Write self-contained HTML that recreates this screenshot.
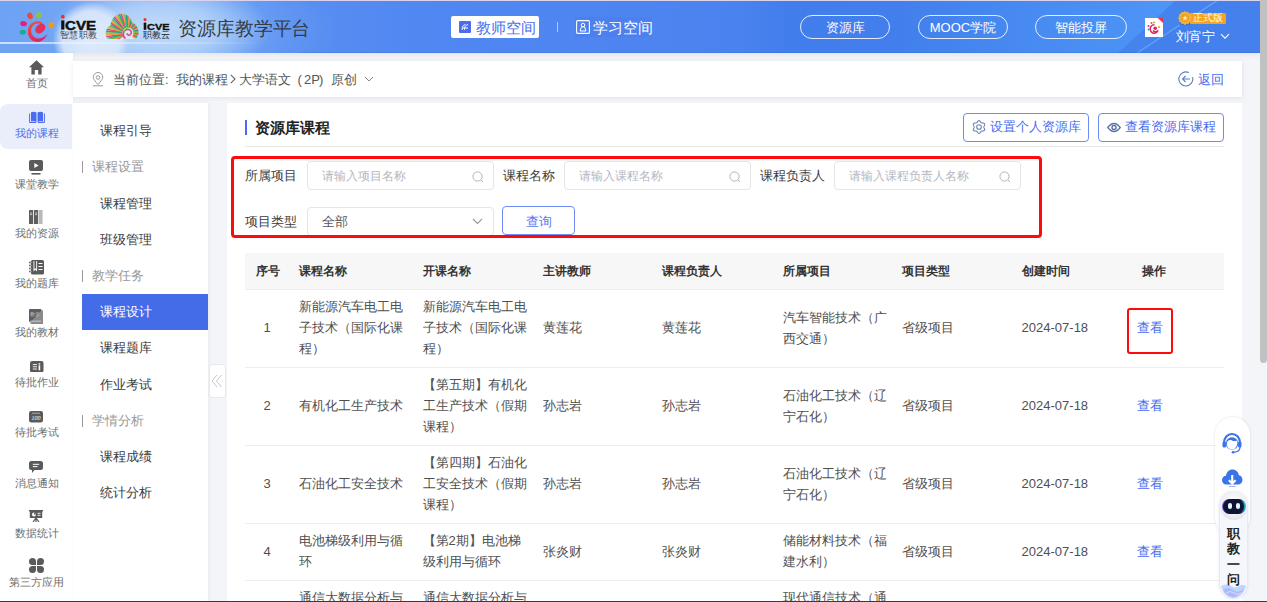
<!DOCTYPE html>
<html><head><meta charset="utf-8">
<style>
*{box-sizing:border-box;margin:0;padding:0}
html,body{width:1267px;height:602px;overflow:hidden}
body{font-family:"Liberation Sans",sans-serif;background:#f4f5f9;position:relative;color:#333;font-size:13px}
.a{position:absolute;white-space:nowrap}
#hdr{position:absolute;left:0;top:0;width:1260px;height:53px;background:linear-gradient(90deg,#6ea2f3 0px,#6a9ff3 200px,#5a8ff2 280px,#5187f1 420px,#4e84f0 650px,#4a82ef 740px,#417eec 790px,#4380ec 1000px,#4580ec 1260px);overflow:hidden;box-shadow:0 2px 6px rgba(0,0,0,.07)}
#hdr::after{content:'';position:absolute;left:300px;top:52px;width:960px;height:1px;background:rgba(40,100,220,.25)}
#hdr .topline{position:absolute;left:0;top:0;width:1260px;height:1px;background:#d9d3ee}
.pill{position:absolute;top:15px;height:24px;width:90px;border:1px solid rgba(255,255,255,.85);border-radius:12px;color:#fff;font-size:13px;line-height:23px;text-align:center}
#scroll{position:absolute;left:1260px;top:0;width:7px;height:363px;background:#c1c1c1;border-radius:0 0 4px 4px}
#btmline{position:absolute;left:0;top:601px;width:1267px;height:1px;background:#3a3a3a}
#nav{position:absolute;left:0;top:53px;width:73px;height:549px;background:#fff;box-shadow:1px 0 3px rgba(0,0,0,.04)}
.ni{position:absolute;left:0;width:73px;text-align:center;font-size:11px;color:#6e6e6e;line-height:12px}
.ni svg{display:block;margin:0 auto}
#crumb{position:absolute;left:73px;top:61px;width:1169px;height:36px;background:#fff;box-shadow:0 1px 5px rgba(0,0,0,.08)}
#side2{position:absolute;left:73px;top:103px;width:135px;height:499px;background:#fff;box-shadow:1px 0 4px rgba(0,0,0,.05)}
.s2{position:absolute;left:27px;font-size:13px;color:#3c3c3c;line-height:14px}
.s2g{position:absolute;left:19px;font-size:13px;color:#999;line-height:14px}
#card{position:absolute;left:227px;top:103px;width:1015px;height:499px;background:#fff;overflow:hidden}
.lbl{position:absolute;font-size:13px;color:#3c3c3c;line-height:14px}
.inp{position:absolute;height:29px;border:1px solid #e3e5ea;border-radius:4px;background:#fff}
.ph{position:absolute;left:14px;top:7px;font-size:12px;color:#b5b8bf;line-height:14px}
.btn{position:absolute;border:1px solid #6d8bf3;border-radius:4px;color:#4a6cf0;background:#fff;font-size:13px}
.th{position:absolute;top:161px;font-weight:bold;font-size:12px;color:#333;line-height:14px}
.td{position:absolute;font-size:13px;color:#444;line-height:20.8px;white-space:normal}
.rc{position:absolute;top:0;height:100%;display:flex;flex-direction:column;justify-content:center;font-size:13px;color:#4f4f4f;line-height:20.8px;white-space:nowrap}
.cr{top:11px;font-size:13px;line-height:15px;color:#555}
.hl{position:absolute;left:18px;width:979px;height:1px;background:#ededed}
</style></head><body>
<div id="hdr">
  <div class="a" style="left:0;top:0;width:420px;height:53px;background:
    radial-gradient(circle 38px at 91px 40px,rgba(228,238,253,.92) 0%,rgba(222,234,252,.85) 75%,rgba(215,230,252,0) 100%),
    radial-gradient(ellipse 110px 50px at 160px 30px,rgba(205,227,252,.88) 0%,rgba(190,217,250,.75) 50%,rgba(160,200,248,0) 100%),
    radial-gradient(ellipse 170px 60px at 170px 30px,rgba(130,180,246,.7) 0%,rgba(120,170,244,0) 100%)"></div>
  <div class="a" style="left:0;top:42px;width:260px;height:2px;background:linear-gradient(90deg,rgba(235,245,255,.75),rgba(235,245,255,.5) 50%,rgba(235,245,255,0))"></div>
  <svg class="a" style="left:900px;top:0" width="360" height="53" viewBox="900 0 360 53"><defs><linearGradient id="lg1" x1="0" y1="0" x2="1" y2="0"><stop offset="0" stop-color="#55a8ff" stop-opacity="0"/><stop offset="1" stop-color="#55a8ff" stop-opacity=".55"/></linearGradient></defs>
    <polygon points="900,0 1176,0 1118,53 900,53" fill="url(#lg1)"/>
    <polygon points="1176,0 1218,0 1137,53 1118,53" fill="#5aa0ff" fill-opacity=".08"/>
    <line x1="1218" y1="0" x2="1137" y2="53" stroke="#7cc0ff" stroke-opacity=".55" stroke-width="1.3"/></svg>
  <div class="topline"></div>
  
  <svg class="a" style="left:18px;top:10px" width="40" height="34" viewBox="18 10 40 34">
    <defs><linearGradient id="eg" x1="0" y1="0" x2="0.6" y2="1"><stop offset="0" stop-color="#f0552e"/><stop offset="1" stop-color="#e21f6a"/></linearGradient></defs>
    <ellipse cx="30" cy="15.8" rx="2.7" ry="3.4" fill="#ee4a35" transform="rotate(-25 30 15.8)"/>
    <ellipse cx="38.7" cy="15.2" rx="3.1" ry="3" fill="#8cc048"/>
    <ellipse cx="23.6" cy="23.7" rx="3.4" ry="2.5" fill="#e3207f" transform="rotate(10 23.6 23.7)"/>
    <ellipse cx="22.8" cy="32.2" rx="3" ry="2.4" fill="#17ad8e"/>
    <ellipse cx="51.4" cy="25.3" rx="2.9" ry="3" fill="#f29a10"/>
    <path d="M38 21.2 C31.5 21.2 27.6 26.5 27.8 32 C28 38 32.5 42 38 42 C42 42 45.5 38.5 47.6 33.8 C44.5 37.2 41.5 38.6 38.3 38.4 C34 38.1 31.2 35 31.2 31 C31.2 26.5 34 23.8 38 23.6 C40.5 23.5 42.2 24.2 43.5 25.2 C42.5 22.8 40.6 21.2 38 21.2 Z" fill="url(#eg)"/>
    <ellipse cx="40.3" cy="28.6" rx="5.6" ry="4.2" fill="#e2305a" transform="rotate(-40 40.3 28.6)"/>
  </svg>
  <svg class="a" style="left:58px;top:12px" width="42" height="20" viewBox="58 12 42 20">
    <ellipse cx="62.8" cy="16.8" rx="1.9" ry="2" fill="#e5332a"/>
    <rect x="61.2" y="20.4" width="3.2" height="9.2" fill="#111"/>
    <text x="65" y="29.6" font-family="Liberation Sans" font-weight="bold" font-size="12.6" textLength="31" lengthAdjust="spacingAndGlyphs" fill="#111" stroke="#111" stroke-width=".5">CVE</text>
  </svg>
  <div class="a" style="left:60px;top:30px;font-size:8.6px;line-height:10px;color:#3a3a3a;letter-spacing:0.3px">智慧职教</div>
  <svg class="a" style="left:105px;top:13px" width="34" height="27" viewBox="0 0 34 27"><defs><clipPath id="shell"><path d="M1.5 24.5 C-0.5 20 1 14.5 5.5 12.5 C6 6 10.5 1 16.5 0.8 C22 0.6 26 4.5 27 9.5 C31.5 11.5 34 16 33.5 20.5 C33 24 31 25.8 28 26 L6 26 C3.8 25.8 2.3 25.5 1.5 24.5 Z"/></clipPath></defs>
  <g clip-path="url(#shell)"><rect width="34" height="27" fill="#dcebfb"/><line x1="18.67" y1="22.50" x2="-11.64" y2="40.00" stroke="#e8407a" stroke-width="1.5"/><line x1="18.47" y1="22.11" x2="-13.25" y2="36.90" stroke="#f5a030" stroke-width="1.5"/><line x1="18.30" y1="21.71" x2="-14.59" y2="33.68" stroke="#6cc04e" stroke-width="1.5"/><line x1="18.17" y1="21.29" x2="-15.64" y2="30.35" stroke="#1fa592" stroke-width="1.5"/><line x1="18.08" y1="20.87" x2="-16.39" y2="26.95" stroke="#e8407a" stroke-width="1.5"/><line x1="18.02" y1="20.44" x2="-16.85" y2="23.49" stroke="#f5a030" stroke-width="1.5"/><line x1="18.00" y1="20.00" x2="-17.00" y2="20.00" stroke="#6cc04e" stroke-width="1.5"/><line x1="18.02" y1="19.56" x2="-16.85" y2="16.51" stroke="#1fa592" stroke-width="1.5"/><line x1="18.08" y1="19.13" x2="-16.39" y2="13.05" stroke="#e8407a" stroke-width="1.5"/><line x1="18.17" y1="18.71" x2="-15.64" y2="9.65" stroke="#f5a030" stroke-width="1.5"/><line x1="18.30" y1="18.29" x2="-14.59" y2="6.32" stroke="#6cc04e" stroke-width="1.5"/><line x1="18.47" y1="17.89" x2="-13.25" y2="3.10" stroke="#1fa592" stroke-width="1.5"/><line x1="18.67" y1="17.50" x2="-11.64" y2="-0.00" stroke="#e8407a" stroke-width="1.5"/><line x1="18.90" y1="17.13" x2="-9.77" y2="-2.94" stroke="#f5a030" stroke-width="1.5"/><line x1="19.17" y1="16.79" x2="-7.64" y2="-5.71" stroke="#6cc04e" stroke-width="1.5"/><line x1="19.46" y1="16.46" x2="-5.28" y2="-8.28" stroke="#1fa592" stroke-width="1.5"/><line x1="19.79" y1="16.17" x2="-2.71" y2="-10.64" stroke="#e8407a" stroke-width="1.5"/><line x1="20.13" y1="15.90" x2="0.06" y2="-12.77" stroke="#f5a030" stroke-width="1.5"/><line x1="20.50" y1="15.67" x2="3.00" y2="-14.64" stroke="#6cc04e" stroke-width="1.5"/><line x1="20.89" y1="15.47" x2="6.10" y2="-16.25" stroke="#1fa592" stroke-width="1.5"/><line x1="21.29" y1="15.30" x2="9.32" y2="-17.59" stroke="#e8407a" stroke-width="1.5"/><line x1="21.71" y1="15.17" x2="12.65" y2="-18.64" stroke="#f5a030" stroke-width="1.5"/><line x1="22.13" y1="15.08" x2="16.05" y2="-19.39" stroke="#6cc04e" stroke-width="1.5"/><line x1="22.56" y1="15.02" x2="19.51" y2="-19.85" stroke="#1fa592" stroke-width="1.5"/><line x1="23.00" y1="15.00" x2="23.00" y2="-20.00" stroke="#e8407a" stroke-width="1.5"/><line x1="23.44" y1="15.02" x2="26.49" y2="-19.85" stroke="#f5a030" stroke-width="1.5"/><line x1="23.87" y1="15.08" x2="29.95" y2="-19.39" stroke="#6cc04e" stroke-width="1.5"/><line x1="24.29" y1="15.17" x2="33.35" y2="-18.64" stroke="#1fa592" stroke-width="1.5"/><line x1="24.71" y1="15.30" x2="36.68" y2="-17.59" stroke="#e8407a" stroke-width="1.5"/><line x1="25.11" y1="15.47" x2="39.90" y2="-16.25" stroke="#f5a030" stroke-width="1.5"/><line x1="25.50" y1="15.67" x2="43.00" y2="-14.64" stroke="#6cc04e" stroke-width="1.5"/><line x1="25.87" y1="15.90" x2="45.94" y2="-12.77" stroke="#1fa592" stroke-width="1.5"/><line x1="26.21" y1="16.17" x2="48.71" y2="-10.64" stroke="#e8407a" stroke-width="1.5"/><line x1="26.54" y1="16.46" x2="51.28" y2="-8.28" stroke="#f5a030" stroke-width="1.5"/><line x1="26.83" y1="16.79" x2="53.64" y2="-5.71" stroke="#6cc04e" stroke-width="1.5"/><line x1="27.10" y1="17.13" x2="55.77" y2="-2.94" stroke="#1fa592" stroke-width="1.5"/><line x1="27.33" y1="17.50" x2="57.64" y2="-0.00" stroke="#e8407a" stroke-width="1.5"/><line x1="27.53" y1="17.89" x2="59.25" y2="3.10" stroke="#f5a030" stroke-width="1.5"/><line x1="27.70" y1="18.29" x2="60.59" y2="6.32" stroke="#6cc04e" stroke-width="1.5"/><line x1="27.83" y1="18.71" x2="61.64" y2="9.65" stroke="#1fa592" stroke-width="1.5"/><line x1="27.92" y1="19.13" x2="62.39" y2="13.05" stroke="#e8407a" stroke-width="1.5"/><line x1="27.98" y1="19.56" x2="62.85" y2="16.51" stroke="#f5a030" stroke-width="1.5"/><line x1="28.00" y1="20.00" x2="63.00" y2="20.00" stroke="#6cc04e" stroke-width="1.5"/><line x1="27.98" y1="20.44" x2="62.85" y2="23.49" stroke="#1fa592" stroke-width="1.5"/><line x1="27.92" y1="20.87" x2="62.39" y2="26.95" stroke="#e8407a" stroke-width="1.5"/><line x1="27.83" y1="21.29" x2="61.64" y2="30.35" stroke="#f5a030" stroke-width="1.5"/><line x1="27.70" y1="21.71" x2="60.59" y2="33.68" stroke="#6cc04e" stroke-width="1.5"/><line x1="27.53" y1="22.11" x2="59.25" y2="36.90" stroke="#1fa592" stroke-width="1.5"/><line x1="27.33" y1="22.50" x2="57.64" y2="40.00" stroke="#e8407a" stroke-width="1.5"/><line x1="27.10" y1="22.87" x2="55.77" y2="42.94" stroke="#f5a030" stroke-width="1.5"/><circle cx="23" cy="20" r="5.5" fill="#d6e8fb"/></g>
  <path d="M20.5 25.5 C17 23.5 17.5 17 22.5 16.5 C26 16.2 27.5 19.5 25.5 21.5 C24 23 21.8 22 22.3 20.3" fill="none" stroke="#e8407a" stroke-width="1.6"/><path d="M19 20 C19 16.5 21.5 14.8 24 15" fill="none" stroke="#6cc04e" stroke-width="1"/></svg>
  <svg class="a" style="left:141px;top:16px" width="32" height="16" viewBox="141 16 32 16">
    <ellipse cx="145" cy="19.6" rx="1.5" ry="1.6" fill="#e5332a"/>
    <rect x="143.7" y="22.6" width="2.6" height="7.2" fill="#111"/>
    <text x="147" y="29.8" font-family="Liberation Sans" font-weight="bold" font-size="9.8" textLength="22.5" lengthAdjust="spacingAndGlyphs" fill="#111" stroke="#111" stroke-width=".4">CVE</text>
  </svg>
  <div class="a" style="left:143px;top:30px;font-size:9px;line-height:10px;color:#222">职教云</div>
  <div class="a" style="left:178px;top:17px;font-size:19px;line-height:24px;color:#333c48;letter-spacing:-0.1px">资源库教学平台</div>
  <div class="a" style="left:451px;top:16px;width:88px;height:22px;background:#fff;border-radius:2px"></div>
  <svg class="a" style="left:459px;top:21px" width="12" height="12" viewBox="0 0 12 12"><rect width="12" height="12" rx="1" fill="#4d6ce8"/><path d="M3.2 8.8 C2.5 6.5 4.5 3.8 6.5 3.5 M5.5 8.8 C5 6.5 7 3.8 9 3.5 M3.5 7 H9" stroke="#fff" stroke-width="1" fill="none"/></svg>
  <div class="a" style="left:476px;top:18px;font-size:15px;line-height:20px;color:#4a6cf0">教师空间</div>
  <div class="a" style="left:557px;top:22px;width:1px;height:10px;background:rgba(255,255,255,.55)"></div>
  <div class="a" style="left:575px;top:17px;width:77px;height:20px;background:rgba(70,120,235,.3)"></div>
  <svg class="a" style="left:576px;top:20px" width="14" height="14" viewBox="0 0 14 14"><rect x=".6" y=".6" width="12.8" height="12.8" rx="1" fill="none" stroke="#fff" stroke-width="1.1"/><circle cx="7" cy="5" r="1.8" fill="none" stroke="#fff" stroke-width="1"/><path d="M4 11 L5.5 6.8 H8.5 L10 11 Z" fill="none" stroke="#fff" stroke-width="1"/></svg>
  <div class="a" style="left:593px;top:18px;font-size:15px;line-height:20px;color:#fff">学习空间</div>
  <div class="pill" style="left:800px">资源库</div>
  <div class="pill" style="left:918px">MOOC学院</div>
  <div class="pill" style="left:1035px;width:92px">智能投屏</div>
  <div class="a" style="left:1145px;top:17.5px;width:18px;height:19px;background:#fff"></div>
  <svg class="a" style="left:1145px;top:17.5px" width="18" height="19" viewBox="0 0 18 19">
    <circle cx="6.5" cy="5" r="1" fill="#ee4a35"/><circle cx="9" cy="4.5" r="1" fill="#8cc048"/><circle cx="3.5" cy="8" r="1" fill="#e3207f"/><circle cx="3.5" cy="11.5" r="1" fill="#17ad8e"/><circle cx="14" cy="9" r="1" fill="#f29a10"/>
    <path d="M9.5 6.8 C6 6.8 5 9.5 5.2 11.5 C5.5 14 7.5 15.5 9.5 15.2 C11 15 12.5 14 13.2 12.5 C11.5 14 9 14 8 12.5" fill="none" stroke="#e0245e" stroke-width="1.5"/>
    <circle cx="10.2" cy="10.3" r="1.8" fill="#e0245e"/>
    <path d="M12.8 0 H18 V5 Z" fill="#e8364f"/>
  </svg>
  <div class="a" style="left:1189px;top:13px;width:36.5px;height:10.8px;background:#f6a31d;border-radius:1.5px"></div>
  <svg class="a" style="left:1177px;top:9.5px" width="16" height="16" viewBox="0 0 16 16"><path d="M3.5 11 L2.8 15.5 L5 14.5 L6.5 15.8 L7.5 12 Z M12.5 11 L13.2 15.5 L11 14.5 L9.5 15.8 L8.5 12Z" fill="#3c6fd0"/><path d="M8 1 L9.6 2.2 L11.5 1.9 L12.2 3.8 L14 4.6 L13.8 6.5 L15 8 L13.8 9.5 L14 11.4 L12.2 12.2 L11.5 14.1 L9.6 13.8 L8 15 L6.4 13.8 L4.5 14.1 L3.8 12.2 L2 11.4 L2.2 9.5 L1 8 L2.2 6.5 L2 4.6 L3.8 3.8 L4.5 1.9 L6.4 2.2Z" fill="#f4b23a"/><circle cx="8" cy="8" r="4.3" fill="#f0a020"/><path d="M8 5.2 L8.8 7.1 L10.8 7.2 L9.3 8.5 L9.8 10.4 L8 9.4 L6.2 10.4 L6.7 8.5 L5.2 7.2 L7.2 7.1Z" fill="#fde7a2"/></svg>
  <div class="a" style="left:1193px;top:12px;font-size:10px;line-height:12px;color:#fff">正式版</div>
  <div class="a" style="left:1176px;top:28.5px;font-size:13px;line-height:16px;color:#fff">刘宵宁</div>
  <svg class="a" style="left:1220px;top:32.5px" width="10" height="7" viewBox="0 0 10 7"><path d="M1 1.2 L5 5.2 L9 1.2" fill="none" stroke="#fff" stroke-width="1.1"/></svg>
</div>
<div id="scroll"></div>
<div id="nav">
  <div class="a" style="left:0;top:50.5px;width:72px;height:45px;background:#eaeefb;border-radius:8px 0 0 8px"></div>
  <svg class="a" style="left:29px;top:7px" width="15" height="15" viewBox="0 0 15 15"><path d="M7.5 0.3 L15 7.2 H12.6 V14.5 H9.2 V10 H5.8 V14.5 H2.4 V7.2 H0 Z" fill="#5a5a5a"/></svg>
  <div class="ni" style="top:24px">首页</div>
  <svg class="a" style="left:28.5px;top:57.5px" width="16" height="12" viewBox="0 0 16 12"><path d="M2 1.2 Q5 0 7.5 1.6 V11 Q5 9.6 2 10.6Z M8.5 1.6 Q11 0 14 1.2 V10.6 Q11 9.6 8.5 11Z" fill="#4a6cf0"/><path d="M0.6 2.5 V11.5 H7.2 M15.4 2.5 V11.5 H8.8" fill="none" stroke="#4a6cf0" stroke-width="1"/></svg>
  <div class="ni" style="top:74px;color:#4a6cf0">我的课程</div>
  <svg class="a" style="left:29px;top:107px" width="14" height="15" viewBox="0 0 14 15"><rect x="0" y="0" width="14" height="11" rx="2" fill="#5a5a5a"/><path d="M5.3 3 L9.6 5.5 L5.3 8Z" fill="#fff"/><rect x="2.5" y="13" width="9" height="1.6" fill="#5a5a5a"/></svg>
  <div class="ni" style="top:125px">课堂教学</div>
  <svg class="a" style="left:29px;top:157px" width="14" height="14" viewBox="0 0 14 14"><rect x="0" y="0" width="4.2" height="14" rx=".6" fill="#5e5e5e"/><rect x="5" y="0" width="4.2" height="14" rx=".6" fill="#5e5e5e"/><rect x="10" y="0" width="3.6" height="14" rx=".6" fill="#b9b9b9"/><path d="M1 3 H3.2 M1 4.6 H3.2 M6 3 H8.2 M6 4.6 H8.2" stroke="#ddd" stroke-width=".8"/></svg>
  <div class="ni" style="top:174px">我的资源</div>
  <svg class="a" style="left:28.5px;top:206.5px" width="15" height="15" viewBox="0 0 15 15"><rect x="2" y="0" width="13" height="14.5" rx="1.5" fill="#5a5a5a"/><path d="M0 2.5 H3.5 M0 5.5 H3.5 M0 8.5 H3.5 M0 11.5 H3.5" stroke="#5a5a5a" stroke-width="1.3"/><path d="M0.8 2.5 H2.8 M0.8 5.5 H2.8 M0.8 8.5 H2.8 M0.8 11.5 H2.8" stroke="#fff" stroke-width=".4"/><path d="M4.5 1 V11.5 L6.3 9.8 L8.1 11.5 V1Z" fill="#fff"/><path d="M5.4 1 V9 L6.3 8.2 L7.2 9 V1Z" fill="#5a5a5a"/><path d="M9.5 3.5 H13.5 M9.5 6.5 H13.5 M9.5 9.5 H13.5" stroke="#fff" stroke-width="1.1"/></svg>
  <div class="ni" style="top:224px">我的题库</div>
  <svg class="a" style="left:29px;top:256px" width="14" height="15" viewBox="0 0 14 15"><rect x="0" y="0" width="12.5" height="13" rx="1" fill="#5e5e5e"/><path d="M12.5 1.5 H14 V15 H1.5 V13" fill="#8a8a8a"/><path d="M1.2 12.2 H12" stroke="#ddd" stroke-width=".8"/><text x="6.3" y="6.5" font-size="4.5" fill="#c8c8c8" text-anchor="middle" font-family="Liberation Sans">教学</text></svg>
  <div class="ni" style="top:273px">我的教材</div>
  <svg class="a" style="left:30px;top:307.5px" width="13.5" height="11.5" viewBox="0 0 13.5 11.5"><rect x="0" y="0" width="13.5" height="11.5" rx="2.2" fill="#5a5a5a"/><path d="M2.8 3.6 H7 M2.8 5.8 H7 M2.8 8 H7" stroke="#fff" stroke-width=".9"/><rect x="8.6" y="2.2" width="1.6" height="1.4" fill="#fff"/><rect x="8.6" y="4.3" width="1.6" height="5" fill="#fff"/></svg>
  <div class="ni" style="top:323px">待批作业</div>
  <svg class="a" style="left:29px;top:358px" width="14" height="11.5" viewBox="0 0 14 11.5"><rect x="0" y="0" width="14" height="11.5" rx="2.2" fill="#5a5a5a"/><path d="M3 2.2 H11" stroke="#ccc" stroke-width=".7"/><text x="7" y="9" font-size="6" font-style="italic" fill="#fff" text-anchor="middle" font-family="Liberation Serif">100</text></svg>
  <div class="ni" style="top:373px">待批考试</div>
  <svg class="a" style="left:29px;top:407.5px" width="14" height="12" viewBox="0 0 14 12"><path d="M2.5 0 H11.5 Q14 0 14 2.5 V6.5 Q14 9 11.5 9 H5.5 L3 12 V9 H2.5 Q0 9 0 6.5 V2.5 Q0 0 2.5 0Z" fill="#5a5a5a"/><path d="M3.8 3.3 H10.2 M3.8 5.6 H8.5" stroke="#fff" stroke-width="1"/></svg>
  <div class="ni" style="top:424px">消息通知</div>
  <svg class="a" style="left:29px;top:457px" width="14" height="12" viewBox="0 0 14 12"><rect x="0" y="0" width="14" height="1.4" fill="#5a5a5a"/><rect x="0.8" y="1" width="12.4" height="7" fill="#5a5a5a"/><circle cx="5" cy="4.5" r="2" fill="#fff"/><path d="M5 4.5 V2.5 A2 2 0 0 1 7 4.5Z" fill="#5a5a5a"/><path d="M8.5 3.3 H11.5 M8.5 5.3 H11.5" stroke="#fff" stroke-width=".9"/><path d="M4 12 L7 8 L10 12 M7 8 V12" fill="none" stroke="#5a5a5a" stroke-width="1.2"/></svg>
  <div class="ni" style="top:474px">数据统计</div>
  <svg class="a" style="left:28.5px;top:505px" width="15" height="15" viewBox="0 0 15 15"><path d="M7 7 H3.5 A3.5 3.5 0 1 1 7 3.5Z" fill="#5a5a5a"/><path d="M8 7 V3.5 A3.5 3.5 0 1 1 11.5 7Z" fill="#5a5a5a"/><path d="M7 8 V11.5 A3.5 3.5 0 1 1 3.5 8Z" fill="#5a5a5a"/><path d="M8 8 H11.5 A3.5 3.5 0 1 1 8 11.5Z" fill="#5a5a5a"/></svg>
  <div class="ni" style="top:523px">第三方应用</div>
</div>
<div id="crumb">
  <svg class="a" style="left:18.5px;top:11px" width="12" height="15" viewBox="0 0 12 14"><path d="M6 12 C3 8.5 1.2 6.5 1.2 4.8 A4.8 4.8 0 0 1 10.8 4.8 C10.8 6.5 9 8.5 6 12Z" fill="none" stroke="#999" stroke-width="1"/><circle cx="6" cy="5" r="1.8" fill="none" stroke="#999" stroke-width="1"/><path d="M1 13.3 H11" stroke="#999" stroke-width="1"/></svg>
  <div class="a cr" style="left:39.5px">当前位置</div>
  <div class="a cr" style="left:92px">:</div>
  <div class="a cr" style="left:103px">我的课程</div>
  <svg class="a" style="left:157px;top:13px" width="6" height="10" viewBox="0 0 6 10"><path d="M0.8 0.8 L5 5 L0.8 9.2" fill="none" stroke="#666" stroke-width="1.1"/></svg>
  <div class="a cr" style="left:166px">大学语文</div>
  <div class="a cr" style="left:224.5px">(</div>
  <div class="a cr" style="left:231px">2P</div>
  <div class="a cr" style="left:246px">)</div>
  <div class="a cr" style="left:258px">原创</div>
  <svg class="a" style="left:291px;top:15px" width="10" height="7" viewBox="0 0 10 7"><path d="M1 1 L5 5 L9 1" fill="none" stroke="#888" stroke-width="1"/></svg>
  <svg class="a" style="left:1105px;top:10px" width="16" height="16" viewBox="0 0 16 16"><path d="M10.8 1.6 A7 7 0 1 0 14.6 6.2" fill="none" stroke="#5b7ec4" stroke-width="1.1"/><path d="M12 8 H4.6 M7.6 5 L4.6 8 L7.6 11" fill="none" stroke="#5b7ec4" stroke-width="1.1"/></svg>
  <div class="a" style="left:1124.5px;top:11px;font-size:13px;line-height:16px;color:#4a6cf0">返回</div>
</div>
<div id="side2">
  <div class="s2" style="top:21px">课程引导</div>
  <div class="a" style="left:9px;top:58px;width:1px;height:12px;background:#999"></div>
  <div class="s2g" style="top:57px">课程设置</div>
  <div class="s2" style="top:94px">课程管理</div>
  <div class="s2" style="top:130px">班级管理</div>
  <div class="a" style="left:9px;top:167px;width:1px;height:12px;background:#999"></div>
  <div class="s2g" style="top:166px">教学任务</div>
  <div class="a" style="left:9px;top:191px;width:126px;height:36px;background:#456ce8"></div>
  <div class="s2" style="top:202px;color:#fff">课程设计</div>
  <div class="s2" style="top:238px">课程题库</div>
  <div class="s2" style="top:275px">作业考试</div>
  <div class="a" style="left:9px;top:312px;width:1px;height:12px;background:#999"></div>
  <div class="s2g" style="top:311px">学情分析</div>
  <div class="s2" style="top:347px">课程成绩</div>
  <div class="s2" style="top:383px">统计分析</div>
</div>
<div class="a" style="left:209px;top:364px;width:17px;height:34px;background:#fff;border:1px solid #e6e8ee;border-radius:3px"></div>
<svg class="a" style="left:211px;top:374px" width="12" height="14" viewBox="0 0 12 14"><path d="M6 1 L1 7 L6 13 M10.5 1 L5.5 7 L10.5 13" fill="none" stroke="#c6c8cc" stroke-width="1"/></svg>
<div id="card">
  <div class="a" style="left:18px;top:17px;width:2px;height:15px;background:#4a6cf0"></div>
  <div class="a" style="left:28px;top:15px;font-size:15px;line-height:19px;font-weight:bold;color:#222">资源库课程</div>
  <div class="btn a" style="left:736px;top:10px;width:126px;height:29px"></div>
  <svg class="a" style="left:745px;top:17px" width="14" height="14" viewBox="0 0 14 14"><path d="M11.80 7.00 L11.89 7.43 L12.12 7.90 L12.41 8.45 L12.64 9.05 L12.70 9.66 L12.54 10.20 L12.15 10.61 L11.60 10.86 L10.96 10.96 L10.34 10.98 L9.81 11.02 L9.40 11.16 L9.07 11.45 L8.78 11.89 L8.45 12.41 L8.04 12.91 L7.55 13.27 L7.00 13.40 L6.45 13.27 L5.96 12.91 L5.55 12.41 L5.22 11.89 L4.93 11.45 L4.60 11.16 L4.19 11.02 L3.66 10.98 L3.04 10.96 L2.40 10.86 L1.85 10.61 L1.46 10.20 L1.30 9.66 L1.36 9.05 L1.59 8.45 L1.88 7.90 L2.11 7.43 L2.20 7.00 L2.11 6.57 L1.88 6.10 L1.59 5.55 L1.36 4.95 L1.30 4.34 L1.46 3.80 L1.85 3.39 L2.40 3.14 L3.04 3.04 L3.66 3.02 L4.19 2.98 L4.60 2.84 L4.93 2.55 L5.22 2.11 L5.55 1.59 L5.96 1.09 L6.45 0.73 L7.00 0.60 L7.55 0.73 L8.04 1.09 L8.45 1.59 L8.78 2.11 L9.07 2.55 L9.40 2.84 L9.81 2.98 L10.34 3.02 L10.96 3.04 L11.60 3.14 L12.15 3.39 L12.54 3.80 L12.70 4.34 L12.64 4.95 L12.41 5.55 L12.12 6.10 L11.89 6.57 L11.80 7.00Z" fill="none" stroke="#6f86b0" stroke-width="1.1"/><circle cx="7" cy="7" r="2.3" fill="none" stroke="#6f86b0" stroke-width="1.1"/></svg>
  <div class="a" style="left:763px;top:16px;font-size:13px;line-height:16px;color:#4a6cf0">设置个人资源库</div>
  <div class="btn a" style="left:871px;top:10px;width:126px;height:29px"></div>
  <svg class="a" style="left:880px;top:19px" width="14" height="11" viewBox="0 0 14 11"><path d="M0.8 5.5 Q7 -2.5 13.2 5.5 Q7 13.5 0.8 5.5Z" fill="none" stroke="#5a73a6" stroke-width="1.4"/><circle cx="7" cy="5.5" r="2" fill="none" stroke="#5a73a6" stroke-width="1.4"/></svg>
  <div class="a" style="left:898px;top:16px;font-size:13px;line-height:16px;color:#4a6cf0">查看资源库课程</div>
  <div class="a" style="left:18px;top:43px;width:979px;height:1px;background:#e8e8e8"></div>

  <div class="lbl" style="left:18px;top:66px">所属项目</div>
  <div class="inp" style="left:80px;top:58px;width:187px"><div class="ph">请输入项目名称</div><svg class="a" style="left:164px;top:8.5px" width="12" height="12" viewBox="0 0 12 12"><circle cx="5.5" cy="5.5" r="4.6" fill="none" stroke="#b0b3ba" stroke-width="1"/><path d="M8.8 8.8 L11 11" stroke="#b0b3ba" stroke-width="1"/></svg></div>
  <div class="lbl" style="left:276px;top:66px">课程名称</div>
  <div class="inp" style="left:337px;top:58px;width:187px"><div class="ph">请输入课程名称</div><svg class="a" style="left:164px;top:8.5px" width="12" height="12" viewBox="0 0 12 12"><circle cx="5.5" cy="5.5" r="4.6" fill="none" stroke="#b0b3ba" stroke-width="1"/><path d="M8.8 8.8 L11 11" stroke="#b0b3ba" stroke-width="1"/></svg></div>
  <div class="lbl" style="left:533px;top:66px">课程负责人</div>
  <div class="inp" style="left:607px;top:58px;width:187px"><div class="ph">请输入课程负责人名称</div><svg class="a" style="left:164px;top:8.5px" width="12" height="12" viewBox="0 0 12 12"><circle cx="5.5" cy="5.5" r="4.6" fill="none" stroke="#b0b3ba" stroke-width="1"/><path d="M8.8 8.8 L11 11" stroke="#b0b3ba" stroke-width="1"/></svg></div>
  <div class="lbl" style="left:18px;top:112px">项目类型</div>
  <div class="inp" style="left:80px;top:103.5px;width:187px"><div class="ph" style="color:#555;font-size:12.5px;top:7px">全部</div><svg class="a" style="left:164px;top:10px" width="11" height="7" viewBox="0 0 11 7"><path d="M1 1 L5.5 5.5 L10 1" fill="none" stroke="#999" stroke-width="1.1"/></svg></div>
  <div class="btn a" style="left:275px;top:103px;width:73px;height:29px;text-align:center;line-height:29px;font-size:13px;color:#5b78ef">查询</div>
  <div class="a" style="left:4px;top:53px;width:811px;height:81.5px;border:3px solid #ff0a0a;border-radius:4px"></div>

  <div class="a" style="left:18px;top:150px;width:979px;height:36px;background:#f7f7f7"></div>
  <div class="th" style="left:29px">序号</div>
  <div class="th" style="left:72px">课程名称</div>
  <div class="th" style="left:195.6px">开课名称</div>
  <div class="th" style="left:316px">主讲教师</div>
  <div class="th" style="left:435px">课程负责人</div>
  <div class="th" style="left:555.6px">所属项目</div>
  <div class="th" style="left:675px">项目类型</div>
  <div class="th" style="left:794.6px">创建时间</div>
  <div class="th" style="left:914.5px">操作</div>
<div class="hl" style="top:186.0px"></div>
<div class="a" style="left:18px;top:187.0px;width:979px;height:77.0px">
<div class="rc" style="left:0;width:44px;text-align:center">1</div>
<div class="rc" style="left:54.0px">新能源汽车电工电<br>子技术（国际化课<br>程）</div>
<div class="rc" style="left:177.6px">新能源汽车电工电<br>子技术（国际化课<br>程）</div>
<div class="rc" style="left:298.0px">黄莲花</div>
<div class="rc" style="left:417.0px">黄莲花</div>
<div class="rc" style="left:537.6px">汽车智能技术（广<br>西交通）</div>
<div class="rc" style="left:657.0px">省级项目</div>
<div class="rc" style="left:776.6px">2024-07-18</div>
<div class="rc" style="left:892px"><span style="color:#4a6cf0">查看</span></div>
</div>
<div class="hl" style="top:264.0px"></div>
<div class="a" style="left:18px;top:265.0px;width:979px;height:77.0px">
<div class="rc" style="left:0;width:44px;text-align:center">2</div>
<div class="rc" style="left:54.0px">有机化工生产技术</div>
<div class="rc" style="left:177.6px">【第五期】有机化<br>工生产技术（假期<br>课程）</div>
<div class="rc" style="left:298.0px">孙志岩</div>
<div class="rc" style="left:417.0px">孙志岩</div>
<div class="rc" style="left:537.6px">石油化工技术（辽<br>宁石化）</div>
<div class="rc" style="left:657.0px">省级项目</div>
<div class="rc" style="left:776.6px">2024-07-18</div>
<div class="rc" style="left:892px"><span style="color:#4a6cf0">查看</span></div>
</div>
<div class="hl" style="top:342.0px"></div>
<div class="a" style="left:18px;top:343.0px;width:979px;height:77.0px">
<div class="rc" style="left:0;width:44px;text-align:center">3</div>
<div class="rc" style="left:54.0px">石油化工安全技术</div>
<div class="rc" style="left:177.6px">【第四期】石油化<br>工安全技术（假期<br>课程）</div>
<div class="rc" style="left:298.0px">孙志岩</div>
<div class="rc" style="left:417.0px">孙志岩</div>
<div class="rc" style="left:537.6px">石油化工技术（辽<br>宁石化）</div>
<div class="rc" style="left:657.0px">省级项目</div>
<div class="rc" style="left:776.6px">2024-07-18</div>
<div class="rc" style="left:892px"><span style="color:#4a6cf0">查看</span></div>
</div>
<div class="hl" style="top:420.0px"></div>
<div class="a" style="left:18px;top:421.0px;width:979px;height:56px">
<div class="rc" style="left:0;width:44px;text-align:center">4</div>
<div class="rc" style="left:54.0px">电池梯级利用与循<br>环</div>
<div class="rc" style="left:177.6px">【第2期】电池梯<br>级利用与循环</div>
<div class="rc" style="left:298.0px">张炎财</div>
<div class="rc" style="left:417.0px">张炎财</div>
<div class="rc" style="left:537.6px">储能材料技术（福<br>建水利）</div>
<div class="rc" style="left:657.0px">省级项目</div>
<div class="rc" style="left:776.6px">2024-07-18</div>
<div class="rc" style="left:892px"><span style="color:#4a6cf0">查看</span></div>
</div>
<div class="hl" style="top:477.0px"></div>
<div class="a" style="left:18px;top:478.0px;width:979px;height:56px">
<div class="rc" style="left:0;width:44px;text-align:center">5</div>
<div class="rc" style="left:54.0px">通信大数据分析与<br>应用</div>
<div class="rc" style="left:177.6px">通信大数据分析与<br>应用</div>
<div class="rc" style="left:298.0px"></div>
<div class="rc" style="left:417.0px"></div>
<div class="rc" style="left:537.6px">现代通信技术（通<br>信）</div>
<div class="rc" style="left:657.0px">省级项目</div>
<div class="rc" style="left:776.6px">2024-07-18</div>
<div class="rc" style="left:892px"><span style="color:#4a6cf0">查看</span></div>
</div>
  <div class="a" style="left:900px;top:205.3px;width:45.5px;height:45.5px;border:2.5px solid #ff0a0a;border-radius:3px"></div>
</div>
<div class="a" style="left:1215px;top:416.5px;width:35px;height:118px;background:#fff;border-radius:17.5px;box-shadow:0 0 3px rgba(0,0,0,.12)"></div>
<svg class="a" style="left:1221px;top:432px" width="22" height="22" viewBox="0 0 22 22"><path d="M3 11 C3 5.5 6.5 2 11 2 C15.5 2 19 5.5 19 11" fill="none" stroke="#3b74e6" stroke-width="2.2"/><circle cx="11" cy="11.5" r="6.2" fill="#3b74e6"/><path d="M6 10.5 C7 8 9 7.5 11 8.5 C13 9.5 15 9 16 8.5 C16.5 10 16.5 12 16 13 C15 16 13 17.5 11 17.5 C8 17.5 6 15 5.8 12Z" fill="#fff"/><rect x="1.5" y="9.5" width="3.5" height="6" rx="1.5" fill="#3b74e6"/><rect x="17" y="9.5" width="3.5" height="6" rx="1.5" fill="#3b74e6"/><path d="M19 15 C19 18.5 16.5 20 13 20.2" fill="none" stroke="#3b74e6" stroke-width="1.3"/><circle cx="12" cy="20.2" r="1.3" fill="#3b74e6"/></svg>
<svg class="a" style="left:1221px;top:468px" width="22" height="21" viewBox="0 0 22 21"><path d="M5.5 16.5 C2.5 16.5 1 14.5 1 12 C1 9.5 3 7.8 5 7.8 C5.5 4 8 1.5 11.5 1.5 C15 1.5 17.5 4 17.8 7.2 C20 7.5 21.5 9.5 21.5 12 C21.5 14.5 19.5 16.5 17 16.5Z" fill="#3b74e6"/><path d="M11.2 7 V15.5 M7.8 12.2 L11.2 15.6 L14.6 12.2" fill="none" stroke="#fff" stroke-width="2.1"/><path d="M8 18.5 H14.5" stroke="#9ab8ee" stroke-width="1"/></svg>
<div class="a" style="left:1219px;top:491px;width:29px;height:108px;background:#f6f7fd;border:1px solid #e6e9f8;border-radius:14.5px;box-shadow:0 0 3px rgba(120,100,200,.15)"></div>
<div class="a" style="left:1219.5px;top:491px;width:28.5px;height:28.5px;border-radius:50%;background:radial-gradient(circle at 50% 40%,#ffffff 0%,#eceef2 60%,#d5d8de 100%)"></div>
<div class="a" style="left:1221.5px;top:498.5px;width:24px;height:15px;border-radius:7.5px;background:linear-gradient(90deg,#8a5cf5,#0d1330 25%,#0d1330 75%,#35c8f0);"></div>
<div class="a" style="left:1223px;top:499.5px;width:21px;height:13px;border-radius:6.5px;background:#0e1433"></div>
<div class="a" style="left:1227.5px;top:502.5px;width:4px;height:6px;border-radius:2px;background:#e8f6ff"></div>
<div class="a" style="left:1235.5px;top:502.5px;width:4px;height:6px;border-radius:2px;background:#e8f6ff"></div>
<div class="a" style="left:1227px;top:526px;font-size:13px;line-height:15.3px;font-weight:bold;color:#222;white-space:normal;width:14px">职<br>教<br>一<br>问</div>
<svg class="a" style="left:1220px;top:582px" width="27" height="17" viewBox="0 0 27 17"><path d="M1 4 Q6 1 11 4 T21 3 Q24 2.5 26 4 L24 9 Q20 15 13.5 16 Q6 15 3 9Z" fill="#a8c8fb" fill-opacity=".7"/><path d="M3 8 Q8 4 13 8 T24 7 Q22 13 13.5 15.5 Q6 14 3 8Z" fill="#9fa8f6" fill-opacity=".6"/><path d="M6 11 Q10 8 14 11 T21 10" fill="none" stroke="#fff" stroke-opacity=".5" stroke-width="1"/></svg>
<div id="btmline"></div>
</body></html>
